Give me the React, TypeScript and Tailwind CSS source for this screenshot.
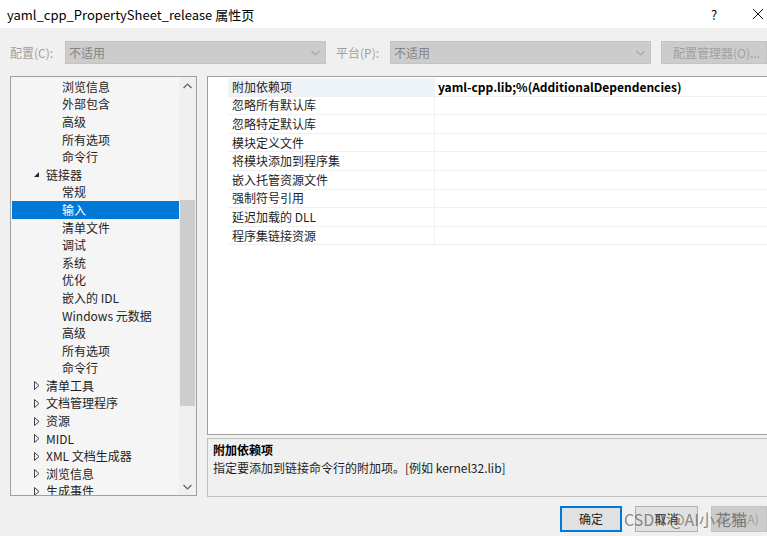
import React from 'react';

type TreeItem = { label: string; level: 1 | 2; state?: 'open' | 'closed'; selected?: boolean };

const treeItems: TreeItem[] = [
  { label: '浏览信息', level: 2 },
  { label: '外部包含', level: 2 },
  { label: '高级', level: 2 },
  { label: '所有选项', level: 2 },
  { label: '命令行', level: 2 },
  { label: '链接器', level: 1, state: 'open' },
  { label: '常规', level: 2 },
  { label: '输入', level: 2, selected: true },
  { label: '清单文件', level: 2 },
  { label: '调试', level: 2 },
  { label: '系统', level: 2 },
  { label: '优化', level: 2 },
  { label: '嵌入的 IDL', level: 2 },
  { label: 'Windows 元数据', level: 2 },
  { label: '高级', level: 2 },
  { label: '所有选项', level: 2 },
  { label: '命令行', level: 2 },
  { label: '清单工具', level: 1, state: 'closed' },
  { label: '文档管理程序', level: 1, state: 'closed' },
  { label: '资源', level: 1, state: 'closed' },
  { label: 'MIDL', level: 1, state: 'closed' },
  { label: 'XML 文档生成器', level: 1, state: 'closed' },
  { label: '浏览信息', level: 1, state: 'closed' },
  { label: '生成事件', level: 1, state: 'closed' },
];

const props = [
  { name: '附加依赖项', value: 'yaml-cpp.lib;%(AdditionalDependencies)' },
  { name: '忽略所有默认库', value: '' },
  { name: '忽略特定默认库', value: '' },
  { name: '模块定义文件', value: '' },
  { name: '将模块添加到程序集', value: '' },
  { name: '嵌入托管资源文件', value: '' },
  { name: '强制符号引用', value: '' },
  { name: '延迟加载的 DLL', value: '' },
  { name: '程序集链接资源', value: '' },
];

function Chevron({ up = false, color = '#606060' }: { up?: boolean; color?: string }) {
  return (
    <svg width="9" height="6" viewBox="0 0 9 6" className="block">
      <path d={up ? 'M0.5 5 L4.5 1 L8.5 5' : 'M0.5 1 L4.5 5 L8.5 1'} fill="none" stroke={color} strokeWidth="1.2" />
    </svg>
  );
}

function Expander({ state }: { state: 'open' | 'closed' }) {
  if (state === 'open') {
    return (
      <svg width="7" height="7" viewBox="0 0 7 7" className="block">
        <path d="M6 1 L6 6 L1 6 Z" fill="#262626" />
      </svg>
    );
  }
  return (
    <svg width="6" height="9" viewBox="0 0 6 9" className="block">
      <path d="M0.5 0.5 L5 4.5 L0.5 8.5 Z" fill="none" stroke="#404040" strokeWidth="1" />
    </svg>
  );
}

function Combo({ text, width }: { text: string; width: string }) {
  return (
    <div className={`${width} h-[23px] bg-[#cccccc] border border-[#c4c4c4] flex items-center justify-between pl-[3px] pr-[5px]`}>
      <span className="text-[#838383]">{text}</span>
      <Chevron color="#a9a9a9" />
    </div>
  );
}

export default function App() {
  return (
    <div className="w-[767px] h-[536px] overflow-hidden bg-[#f0f0f0] flex flex-col text-[12px] leading-none text-[#1e1e1e] font-['Noto_Sans_CJK_SC','Noto_Sans',sans-serif]">
      {/* title bar */}
      <div className="h-[28px] bg-white flex items-center justify-between pl-[7px] shrink-0">
        <span className="text-[13px] text-black">yaml_cpp_PropertySheet_release 属性页</span>
        <div className="flex items-center">
          <span className="w-[46px] text-center text-[13px] text-black">?</span>
          <svg width="30" height="12" viewBox="0 0 30 12" className="block">
            <path d="M16 1 L26 11 M26 1 L16 11" stroke="#111" strokeWidth="1" />
          </svg>
        </div>
      </div>

      {/* toolbar */}
      <div className="h-[48px] flex items-start pt-[13px] pl-[10px] shrink-0">
        <span className="w-[55px] h-[23px] flex items-center text-[#a0a0a0] whitespace-nowrap">配置(C):</span>
        <Combo text="不适用" width="w-[261px]" />
        <span className="w-[64px] h-[23px] flex items-center pl-[10px] text-[#a0a0a0] whitespace-nowrap">平台(P):</span>
        <Combo text="不适用" width="w-[261px]" />
        <div className="ml-[10px] flex-1 h-[23px] bg-[#cccccc] border border-[#c4c4c4] flex items-center pl-[11px] text-[#a0a0a0] whitespace-nowrap">
          配置管理器(O)...
        </div>
      </div>

      {/* main area */}
      <div className="flex pl-[10px] gap-[10px] shrink-0">
        {/* tree */}
        <div className="w-[187px] h-[420px] border border-[#a0a0a0] bg-[#f5f5f5] flex overflow-hidden">
          <div className="flex-1 pt-[1px] pl-[1px] overflow-hidden">
            {treeItems.map((it, i) => (
              <div
                key={i}
                className={`h-[17.6px] flex items-center whitespace-nowrap ${it.selected ? 'bg-[#0078d7] text-white' : 'text-[#1e1e1e]'}`}
              >
                {it.level === 1 ? (
                  <>
                    <span className="w-[34px] flex justify-end pr-[6px]">
                      <Expander state={it.state!} />
                    </span>
                    <span>{it.label}</span>
                  </>
                ) : (
                  <span className="pl-[50px]">{it.label}</span>
                )}
              </div>
            ))}
          </div>
          <div className="w-[17px] bg-[#f0f0f0] flex flex-col items-center">
            <div className="h-[17px] flex items-center justify-center">
              <Chevron up />
            </div>
            <div className="w-[15px] flex-1 flex flex-col">
              <div className="h-[106px]" />
              <div className="h-[206px] bg-[#cdcdcd]" />
            </div>
            <div className="h-[17px] flex items-center justify-center">
              <Chevron />
            </div>
          </div>
        </div>

        {/* right column */}
        <div className="flex-1 flex flex-col gap-[3px]">
          <div className="h-[359px] border-l border-t border-b border-[#a0a0a0] bg-white pt-[1px]">
            {props.map((p, i) => (
              <div key={i} className="h-[18.6px] flex">
                <div className="w-[20px] shrink-0" />
                <div
                  className={`w-[206px] shrink-0 flex items-center pl-[4px] border-b border-[#f0f0f0] ${i === 0 ? 'bg-[#eef2f9]' : ''}`}
                >
                  {p.name}
                </div>
                <div className="flex-1 flex items-center pl-[3px] border-l border-b border-[#f0f0f0] font-bold text-black whitespace-nowrap">
                  {p.value}
                </div>
              </div>
            ))}
          </div>
          <div className="h-[59px] border-l border-t border-b border-[#c0c0c0] bg-[#f0f0f0] pl-[5px] pt-[5px] flex flex-col gap-[6px]">
            <span className="font-bold text-black">附加依赖项</span>
            <span>指定要添加到链接命令行的附加项。[例如 kernel32.lib]</span>
          </div>
        </div>
      </div>

      {/* buttons */}
      <div className="relative flex pl-[560px] pt-[9px] gap-[13px]">
        <div className="w-[62px] h-[26px] border-2 border-[#0078d7] bg-[#e1e1e1] flex items-center justify-center">确定</div>
        <div className="w-[63px] h-[26px] border border-[#b0b0b0] bg-[#e1e1e1] flex items-center justify-center">取消</div>
        <div className="flex-1 h-[26px] border border-[#c4c4c4] bg-[#cccccc] flex items-center justify-center text-[#a0a0a0] whitespace-nowrap">应用(A)</div>
        <span className="absolute left-[624px] top-[10px] text-[16px] leading-[24px] text-[#5a5a5a]/70 whitespace-nowrap">CSDN @AI小花猫</span>
      </div>
    </div>
  );
}
